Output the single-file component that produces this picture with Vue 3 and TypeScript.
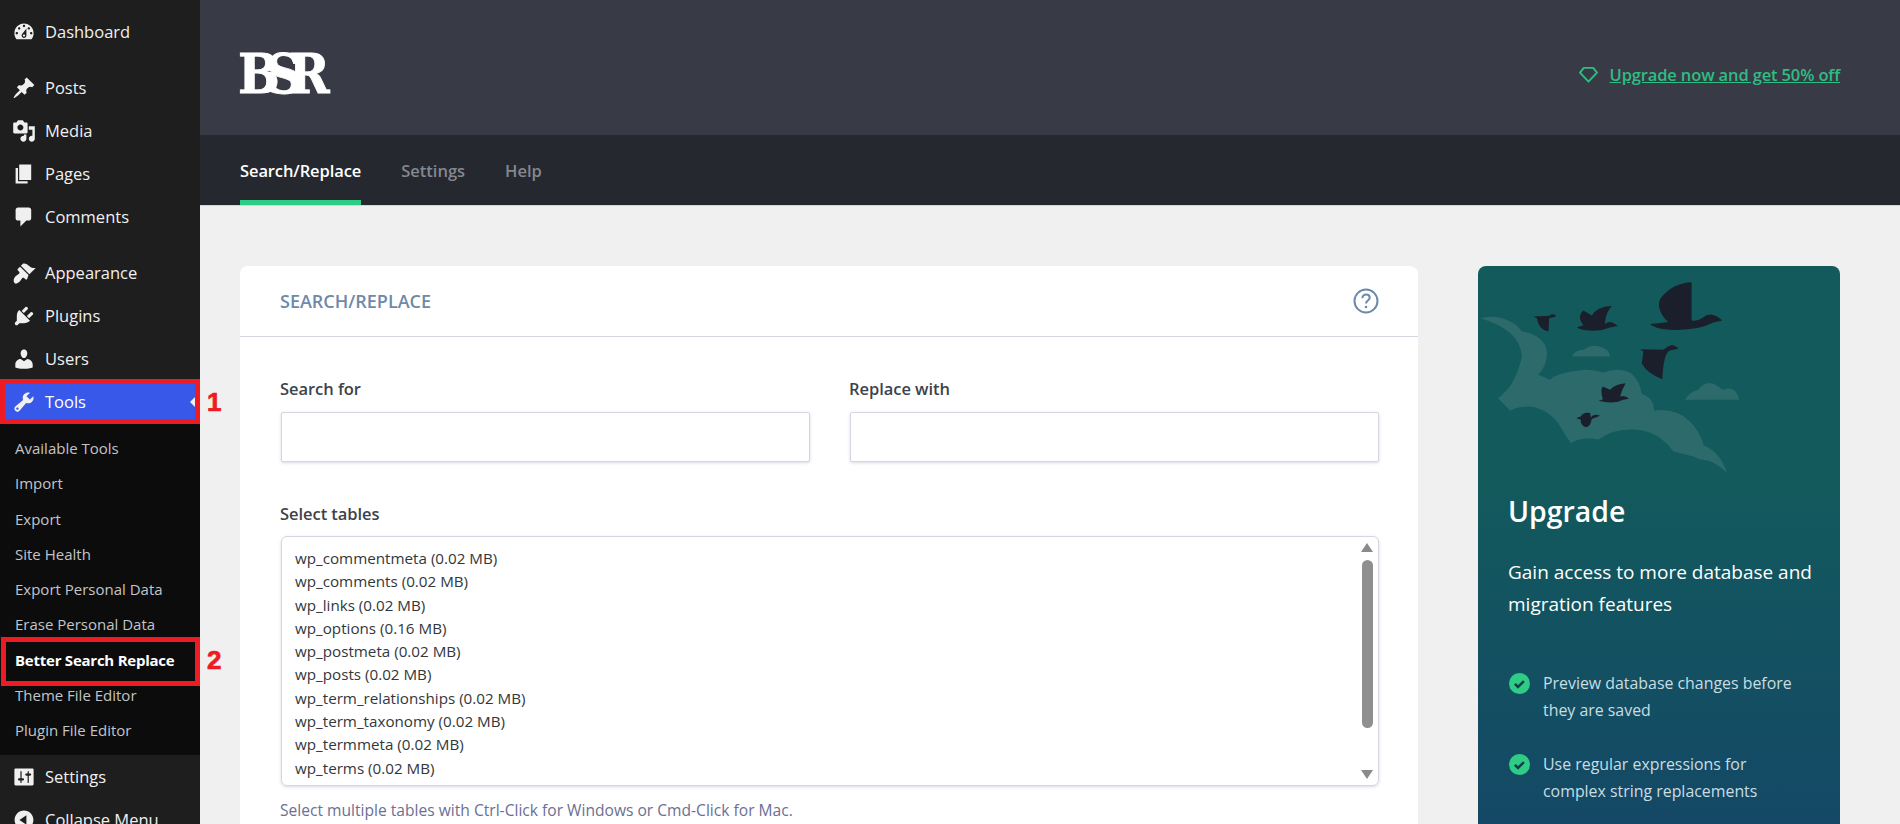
<template>
  <div class="page">
    <aside class="sidebar">
      <nav>
        <div
          v-for="item in topMenu"
          :key="item.label"
          class="menu-item"
          :class="{ 'gap-after': item.gapAfter, current: item.current }"
        >
          <svg class="dashicon" viewBox="0 0 20 20"><path :d="item.icon" /></svg>
          <span>{{ item.label }}</span>
        </div>
      </nav>
      <ul class="submenu">
        <li v-for="sub in toolLinks" :key="sub" :class="{ active: sub === 'Better Search Replace' }">{{ sub }}</li>
      </ul>
      <div class="menu-item settings">
        <svg class="dashicon" viewBox="0 0 20 20"><path :d="icons.settings" /></svg>
        <span>Settings</span>
      </div>
      <div class="menu-item collapse">
        <svg class="dashicon" viewBox="0 0 20 20"><path :d="icons.collapse" /></svg>
        <span>Collapse Menu</span>
      </div>
      <div class="mark mark-tools"></div>
      <div class="mark mark-plugin"></div>
    </aside>
    <span class="mark-num num-one">1</span>
    <span class="mark-num num-two">2</span>

    <main class="content">
      <header class="brand-bar">
        <div class="logo">BSR</div>
        <div class="upgrade-link">
          <svg viewBox="0 0 20 18" width="19" height="17" fill="none" stroke="#2fbd84" stroke-width="2" stroke-linejoin="round">
            <path d="M5 2h10l4 5-9 9.5L1 7z" />
          </svg>
          <a>Upgrade now and get 50% off</a>
        </div>
      </header>
      <div class="tabs">
        <a v-for="tab in tabs" :key="tab" class="tab" :class="{ selected: tab === 'Search/Replace' }">{{ tab }}</a>
      </div>

      <div class="columns">
        <section class="card">
          <div class="card-head">
            <h2>SEARCH/REPLACE</h2>
            <svg class="help" viewBox="0 0 26 26" width="26" height="26" fill="none" stroke="#6d8aa8">
              <circle cx="13" cy="13" r="11.5" stroke-width="2" />
              <path d="M9.4 10.2c0-2.2 1.6-3.6 3.7-3.6s3.6 1.3 3.6 3.2c0 2.6-3.7 2.8-3.7 5.6" stroke-width="2" />
              <circle cx="13" cy="19" r="1.3" fill="#6d8aa8" stroke="none" />
            </svg>
          </div>
          <div class="card-body">
            <div class="field-row">
              <label class="field">
                <span>Search for</span>
                <input v-model="search" type="text" />
              </label>
              <label class="field">
                <span>Replace with</span>
                <input v-model="replace" type="text" />
              </label>
            </div>
            <div class="field-label">Select tables</div>
            <div class="table-list">
              <ul>
                <li v-for="t in tables" :key="t.name">{{ t.name }} ({{ t.size }} MB)</li>
              </ul>
              <div class="scrollbar">
                <i class="arrow up"></i>
                <i class="thumb"></i>
                <i class="arrow down"></i>
              </div>
            </div>
            <p class="hint">Select multiple tables with Ctrl-Click for Windows or Cmd-Click for Mac.</p>
          </div>
        </section>

        <aside class="promo">
          <svg class="birds" viewBox="84 48 1086 640">
            <g fill="#2c6a6c">
              <path d="M90 205Q140 192 180 215Q205 228 215 245Q262 250 285 285Q302 330 265 375L300 390Q315 370 400 360Q430 358 460 368Q510 350 545 372Q570 395 575 432Q612 445 612 482Q680 475 720 515Q750 545 762 587Q810 605 832 670Q800 640 770 632Q745 630 735 622Q700 612 670 605Q625 545 560 540Q490 535 445 570Q400 560 362 580Q345 555 330 530Q300 480 240 470Q205 470 180 483L143 445Q195 410 215 320Q210 240 90 205Z" />
              <path d="M365 320Q375 300 400 300Q425 280 455 292Q478 300 480 320Z" />
              <path d="M705 450Q720 425 745 420Q770 385 805 410Q815 418 820 420Q860 405 867 450Z" />
            </g>
            <g fill="#1b1f2b">
              <path d="M600 222Q625 220 655 216C630 195 620 165 632 145C655 115 690 98 725 97L725 212Q745 214 757 204Q785 180 817 212L790 218Q750 240 680 240Q620 240 600 222Z" />
              <path d="M380 232Q395 228 400 226C385 210 388 190 400 182L425 197C435 178 460 168 485 168C470 185 465 205 465 222Q480 208 503 228L480 233Q450 245 420 242Q395 242 380 232Z" />
              <path d="M250 200L285 198Q300 200 305 193Q315 192 318 200L297 205L295 245Q265 240 260 205Z" />
              <path d="M570 298L640 300Q650 290 665 285Q680 288 685 297L660 302Q640 310 637 388Q590 370 575 340Q580 310 580 305Z" />
              <path d="M445 453Q460 450 458 447Q450 420 458 410L480 420Q495 402 527 400Q515 420 510 440Q525 435 537 447L520 450Q490 465 445 453Z" />
              <path d="M378 505L392 500Q400 485 420 490L422 503Q430 490 450 498L425 508Q420 535 405 532Q390 525 392 510Z" />
            </g>
          </svg>
          <h3>Upgrade</h3>
          <p class="lead">Gain access to more database and migration features</p>
          <ul class="perks">
            <li v-for="perk in perks" :key="perk">
              <svg viewBox="0 0 20 20" width="21" height="21">
                <circle cx="10" cy="10" r="10" fill="#2ecc85" />
                <path d="M5.6 10.3l3 3 5.6-5.6" fill="none" stroke="#123f4c" stroke-width="2.4" />
              </svg>
              <span>{{ perk }}</span>
            </li>
          </ul>
        </aside>
      </div>
    </main>
  </div>
</template>

<script setup lang="ts">
import { ref } from 'vue'

const icons = {
  dashboard: 'M3.76 16h12.48c1.1-1.37 1.76-3.11 1.76-5 0-4.42-3.58-8-8-8s-8 3.58-8 8c0 1.89.66 3.63 1.76 5zM10 4c.55 0 1 .45 1 1s-.45 1-1 1-1-.45-1-1 .45-1 1-1zM6 6c.55 0 1 .45 1 1s-.45 1-1 1-1-.45-1-1 .45-1 1-1zm8 0c.55 0 1 .45 1 1s-.45 1-1 1-1-.45-1-1 .45-1 1-1zm-5.37 5.55L12 7v6c0 1.1-.9 2-2 2s-2-.9-2-2c0-.57.24-1.08.63-1.45zM4 10c.55 0 1 .45 1 1s-.45 1-1 1-1-.45-1-1 .45-1 1-1zm12 0c.55 0 1 .45 1 1s-.45 1-1 1-1-.45-1-1 .45-1 1-1zm-5 3c0-.55-.45-1-1-1s-1 .45-1 1 .45 1 1 1 1-.45 1-1z',
  post: 'M10.44 3.02l1.82-1.82 6.36 6.35-1.83 1.82c-1.05-.68-2.48-.57-3.41.36l-.75.75c-.92.93-1.04 2.35-.35 3.41l-1.83 1.82-2.41-2.41-2.8 2.79c-.42.42-3.38 2.71-3.8 2.29s1.86-3.39 2.28-3.81l2.79-2.79L4.1 9.36l1.83-1.82c1.05.69 2.48.57 3.4-.36l.75-.75c.93-.92 1.05-2.35.36-3.41z',
  media: 'M13 11V4c0-.55-.45-1-1-1h-1.67L9 1H5L3.67 3H2c-.55 0-1 .45-1 1v7c0 .55.45 1 1 1h10c.55 0 1-.45 1-1zM7 4.5c1.38 0 2.5 1.12 2.5 2.5S8.38 9.5 7 9.5 4.5 8.38 4.5 7 5.62 4.5 7 4.5zM14 6h5v10.5c0 1.38-1.12 2.5-2.5 2.5S14 17.88 14 16.5s1.12-2.5 2.5-2.5c.17 0 .34.02.5.05V9h-3V6zm-4 8.05V13h2v3.5c0 1.38-1.12 2.5-2.5 2.5S7 17.88 7 16.5 8.12 14 9.5 14c.17 0 .34.02.5.05z',
  page: 'M6 15V2h10v13H6zm-1 1h8v2H3V5h2v11z',
  comments: 'M5 2h9c1.1 0 2 .9 2 2v7c0 1.1-.9 2-2 2h-2l-5 5v-5H5c-1.1 0-2-.9-2-2V4c0-1.1.9-2 2-2z',
  appearance: 'M14.48 11.06L7.41 3.99l1.5-1.5c.5-.56 2.3-.47 3.51.32 1.21.8 1.43 1.28 2.91 2.1 1.18.64 2.45 1.26 4.45.85zm-.71.71L6.7 4.7 4.93 6.47c-.39.39-.39 1.02 0 1.41l1.06 1.06c.39.39.39 1.03 0 1.42-.6.6-1.43 1.11-2.21 1.69-.35.26-.7.53-1.01.84-1.34 1.34-1.86 3.81-.86 5.22.41.57 1 .78 1.5.8.9-.06 2.16-.97 2.72-1.53.31-.31.58-.66.84-1.01.58-.78 1.09-1.61 1.69-2.21.39-.39 1.03-.39 1.42 0l1.06 1.06c.39.39 1.02.39 1.41 0z',
  plugins: 'M13.11 4.36L9.87 7.6 8 5.73l3.24-3.24c.35-.34 1.05-.2 1.56.32.52.51.66 1.21.31 1.55zm-8 1.77l.91-1.12 9.01 9.01-1.19.84c-.71.71-2.63 1.16-3.82 1.16H6.14L4.9 17.26c-.59.59-1.54.59-2.12 0-.59-.58-.59-1.53 0-2.12l1.24-1.24v-3.88c0-1.13.4-3.19 1.09-3.89zm7.26 3.97l3.24-3.24c.34-.35 1.04-.21 1.55.31.52.51.66 1.21.31 1.55l-3.24 3.25z',
  users: 'M10 9.25c-2.27 0-2.73-3.44-2.73-3.44C7 4.02 7.82 2 9.97 2c2.16 0 2.98 2.02 2.71 3.81 0 0-.41 3.44-2.68 3.44zm0 2.57L12.72 10c2.39 0 4.52 2.33 4.52 4.53v2.49s-3.65 1.13-7.24 1.13c-3.65 0-7.24-1.13-7.24-1.13v-2.49c0-2.25 1.94-4.48 4.47-4.48z',
  tools: 'M16.68 9.77c-1.34 1.34-3.3 1.67-4.95.99l-5.41 6.52c-.99.99-2.59.99-3.58 0s-.99-2.59 0-3.57l6.52-5.42c-.68-1.65-.35-3.61.99-4.95 1.28-1.28 3.12-1.62 4.72-1.06l-2.89 2.89 2.82 2.82 2.86-2.87c.53 1.58.18 3.39-1.08 4.65zM3.81 16.21c.4.39 1.04.39 1.43 0 .4-.4.4-1.04 0-1.43-.39-.4-1.03-.4-1.43 0-.39.39-.39 1.03 0 1.43z',
  settings: 'M18 16V4c0-.55-.45-1-1-1H3c-.55 0-1 .45-1 1v12c0 .55.45 1 1 1h14c.55 0 1-.45 1-1zM8 11h1c.55 0 1 .45 1 1s-.45 1-1 1H8v1.5c0 .28-.22.5-.5.5s-.5-.22-.5-.5V13H6c-.55 0-1-.45-1-1s.45-1 1-1h1V5.5c0-.28.22-.5.5-.5s.5.22.5.5V11zm5-2h-1c-.55 0-1-.45-1-1s.45-1 1-1h1V5.5c0-.28.22-.5.5-.5s.5.22.5.5V7h1c.55 0 1 .45 1 1s-.45 1-1 1h-1v5.5c0 .28-.22.5-.5.5s-.5-.22-.5-.5V9z',
  collapse: 'M10 2.16c4.33 0 7.84 3.51 7.84 7.84s-3.51 7.84-7.84 7.84S2.16 14.33 2.16 10 5.71 2.16 10 2.16zm2 11.72V6.12L6.18 9.97z',
}

interface MenuItem {
  label: string
  icon: string
  gapAfter?: boolean
  current?: boolean
}

const topMenu: MenuItem[] = [
  { label: 'Dashboard', icon: icons.dashboard, gapAfter: true },
  { label: 'Posts', icon: icons.post },
  { label: 'Media', icon: icons.media },
  { label: 'Pages', icon: icons.page },
  { label: 'Comments', icon: icons.comments, gapAfter: true },
  { label: 'Appearance', icon: icons.appearance },
  { label: 'Plugins', icon: icons.plugins },
  { label: 'Users', icon: icons.users },
  { label: 'Tools', icon: icons.tools, current: true },
]

const toolLinks = [
  'Available Tools',
  'Import',
  'Export',
  'Site Health',
  'Export Personal Data',
  'Erase Personal Data',
  'Better Search Replace',
  'Theme File Editor',
  'Plugin File Editor',
]

const tabs = ['Search/Replace', 'Settings', 'Help']

const tables = [
  { name: 'wp_commentmeta', size: '0.02' },
  { name: 'wp_comments', size: '0.02' },
  { name: 'wp_links', size: '0.02' },
  { name: 'wp_options', size: '0.16' },
  { name: 'wp_postmeta', size: '0.02' },
  { name: 'wp_posts', size: '0.02' },
  { name: 'wp_term_relationships', size: '0.02' },
  { name: 'wp_term_taxonomy', size: '0.02' },
  { name: 'wp_termmeta', size: '0.02' },
  { name: 'wp_terms', size: '0.02' },
]

const perks = [
  'Preview database changes before they are saved',
  'Use regular expressions for complex string replacements',
]

const search = ref('')
const replace = ref('')
</script>

<style>
html,
body {
  margin: 0;
  overflow: hidden;
  background: #f0f0f1;
}
</style>

<style scoped>
.page {
  display: flex;
  position: relative;
  width: 1900px;
  height: 824px;
  overflow: hidden;
  font-family: 'Open Sans', 'Noto Sans', sans-serif;
  color: #3c434a;
}

.sidebar {
  position: relative;
  flex: 0 0 200px;
  padding-top: 10px;
  box-sizing: border-box;
  background: #1e1e1e;
}

.menu-item {
  display: flex;
  align-items: center;
  gap: 9px;
  height: 43px;
  padding-left: 12px;
  font-size: 16.5px;
  color: #f0f0f1;
}

.menu-item.gap-after {
  margin-bottom: 13px;
}

.menu-item.current {
  position: relative;
  background: #3858e9;
  color: #fff;
}

.menu-item.current::after {
  content: '';
  position: absolute;
  right: 5px;
  top: 50%;
  margin-top: -5px;
  border: 5px solid transparent;
  border-right-color: #f0f0f1;
  border-left-width: 0;
}

.dashicon {
  flex: none;
  width: 24px;
  height: 24px;
  fill: #f0f0f1;
}

.submenu {
  list-style: none;
  margin: 0;
  padding: 8px 0 7px;
  background: #0c0c0d;
}

.submenu li {
  height: 35.25px;
  line-height: 35px;
  padding-left: 15px;
  font-size: 15px;
  color: #c3c4c7;
}

.submenu li.active {
  font-weight: 700;
  letter-spacing: -0.24px;
  color: #fff;
}

.mark {
  position: absolute;
  box-sizing: border-box;
  border: 5px solid #ed1c24;
}

.mark-tools {
  left: 0;
  top: 379px;
  width: 200px;
  height: 45px;
}

.mark-plugin {
  left: 1px;
  top: 637px;
  width: 199px;
  height: 49px;
}

.mark-num {
  position: absolute;
  left: 207px;
  z-index: 2;
  font-family: 'Liberation Sans', sans-serif;
  font-size: 26px;
  font-weight: 700;
  line-height: 30px;
  color: #ed1c24;
  -webkit-text-stroke: 0.7px #ed1c24;
}

.num-one {
  top: 387px;
}

.num-two {
  top: 645px;
}

.content {
  flex: 1;
  min-width: 0;
}

.brand-bar {
  display: flex;
  align-items: center;
  justify-content: space-between;
  box-sizing: border-box;
  height: 135px;
  padding: 0 60px 0 40px;
  background: #383a45;
}

.logo {
  margin-left: -2px;
  padding-top: 13px;
  font-family: 'DejaVu Serif', 'Liberation Serif', serif;
  font-stretch: condensed;
  font-size: 55px;
  font-weight: 700;
  line-height: 60px;
  letter-spacing: -13.5px;
  color: #fff;
  -webkit-text-stroke: 0.8px #fff;
}

.upgrade-link {
  display: flex;
  align-items: center;
  gap: 12px;
  padding-top: 13px;
}

.upgrade-link a {
  font-size: 16.5px;
  font-weight: 600;
  letter-spacing: -0.14px;
  color: #2fbd84;
  text-decoration: underline;
}

.tabs {
  display: flex;
  gap: 40px;
  box-sizing: border-box;
  height: 71px;
  padding-left: 40px;
  background: #26282f;
  border-bottom: 1px solid #d5d5da;
}

.tab {
  box-sizing: border-box;
  height: 70px;
  line-height: 72px;
  font-size: 16.5px;
  font-weight: 600;
  color: #85878f;
}

.tab.selected {
  letter-spacing: -0.1px;
  color: #fff;
  border-bottom: 5px solid #2ecc85;
}

.columns {
  display: flex;
  align-items: flex-start;
  gap: 60px;
  padding: 60px 60px 0 40px;
}

.card {
  flex: 0 0 1178px;
  height: 700px;
  background: #fff;
  border-radius: 8px 8px 0 0;
}

.card-head {
  display: flex;
  align-items: center;
  justify-content: space-between;
  box-sizing: border-box;
  height: 71px;
  padding: 0 39px 0 40px;
  border-bottom: 1px solid #d5d5e0;
}

.card-head h2 {
  margin: 0;
  font-size: 18px;
  font-weight: 600;
  color: #6d8aa8;
}

.card-body {
  padding: 41px 39px 0 41px;
}

.field-row {
  display: flex;
  gap: 40px;
}

.field {
  flex: 1;
  display: flex;
  flex-direction: column;
  gap: 12px;
}

.field span,
.field-label {
  margin-left: -1px;
  font-size: 16.5px;
  font-weight: 600;
  letter-spacing: -0.05px;
  line-height: 22px;
  color: #3c434a;
}

.field input {
  box-sizing: border-box;
  height: 50px;
  padding: 0 12px;
  border: 1px solid #d5d5e4;
  border-radius: 2px;
  box-shadow: 0 1px 3px rgba(100, 100, 160, 0.25);
  outline: none;
}

.field-label {
  margin-top: 41px;
  margin-bottom: 11px;
}

.table-list {
  display: flex;
  box-sizing: border-box;
  height: 250px;
  border: 1px solid #d5d5e4;
  border-radius: 6px;
  box-shadow: 0 1px 3px rgba(100, 100, 160, 0.25);
}

.table-list ul {
  flex: 1;
  list-style: none;
  margin: 0;
  padding: 10px 13px;
}

.table-list li {
  line-height: 23.3px;
  font-size: 15.2px;
  color: #32373c;
}

.scrollbar {
  display: flex;
  flex-direction: column;
  align-items: center;
  width: 20px;
  margin-right: 1px;
  padding: 6px 0 6px;
}

.arrow {
  width: 0;
  height: 0;
  border: 6.5px solid transparent;
}

.arrow.up {
  border-top: 0;
  border-bottom: 9px solid #8a8a8a;
}

.arrow.down {
  margin-top: auto;
  border-bottom: 0;
  border-top: 9px solid #8a8a8a;
}

.thumb {
  width: 11px;
  height: 168px;
  margin-top: 8px;
  border-radius: 6px;
  background: #8f8f8f;
}

.hint {
  margin: 13px 0 0 -1px;
  font-size: 15.6px;
  color: #6b6f94;
}

.promo {
  flex: 0 0 362px;
  position: relative;
  box-sizing: border-box;
  height: 700px;
  padding: 0 20px 0 30px;
  border-radius: 8px 8px 0 0;
  background: linear-gradient(180deg, #125a5c 0%, #125a5c 30%, #15416a 100%);
  color: #fff;
}

.birds {
  display: block;
  width: 362px;
  height: 213px;
  margin: 0 -20px 0 -30px;
}

.promo h3 {
  margin: 15px 0 0;
  font-size: 28.4px;
  font-weight: 600;
  line-height: 34px;
}

.lead {
  margin: 28px 0 0;
  font-size: 19px;
  line-height: 32px;
}

.perks {
  list-style: none;
  margin: 50px 0 0 1px;
  padding: 0;
}

.perks li {
  display: flex;
  gap: 13px;
  margin-bottom: 27px;
  font-size: 15.9px;
  line-height: 27px;
  color: #c9dde2;
}

.perks li span {
  max-width: 260px;
}

.perks svg {
  flex: none;
  margin-top: 3px;
}
</style>
